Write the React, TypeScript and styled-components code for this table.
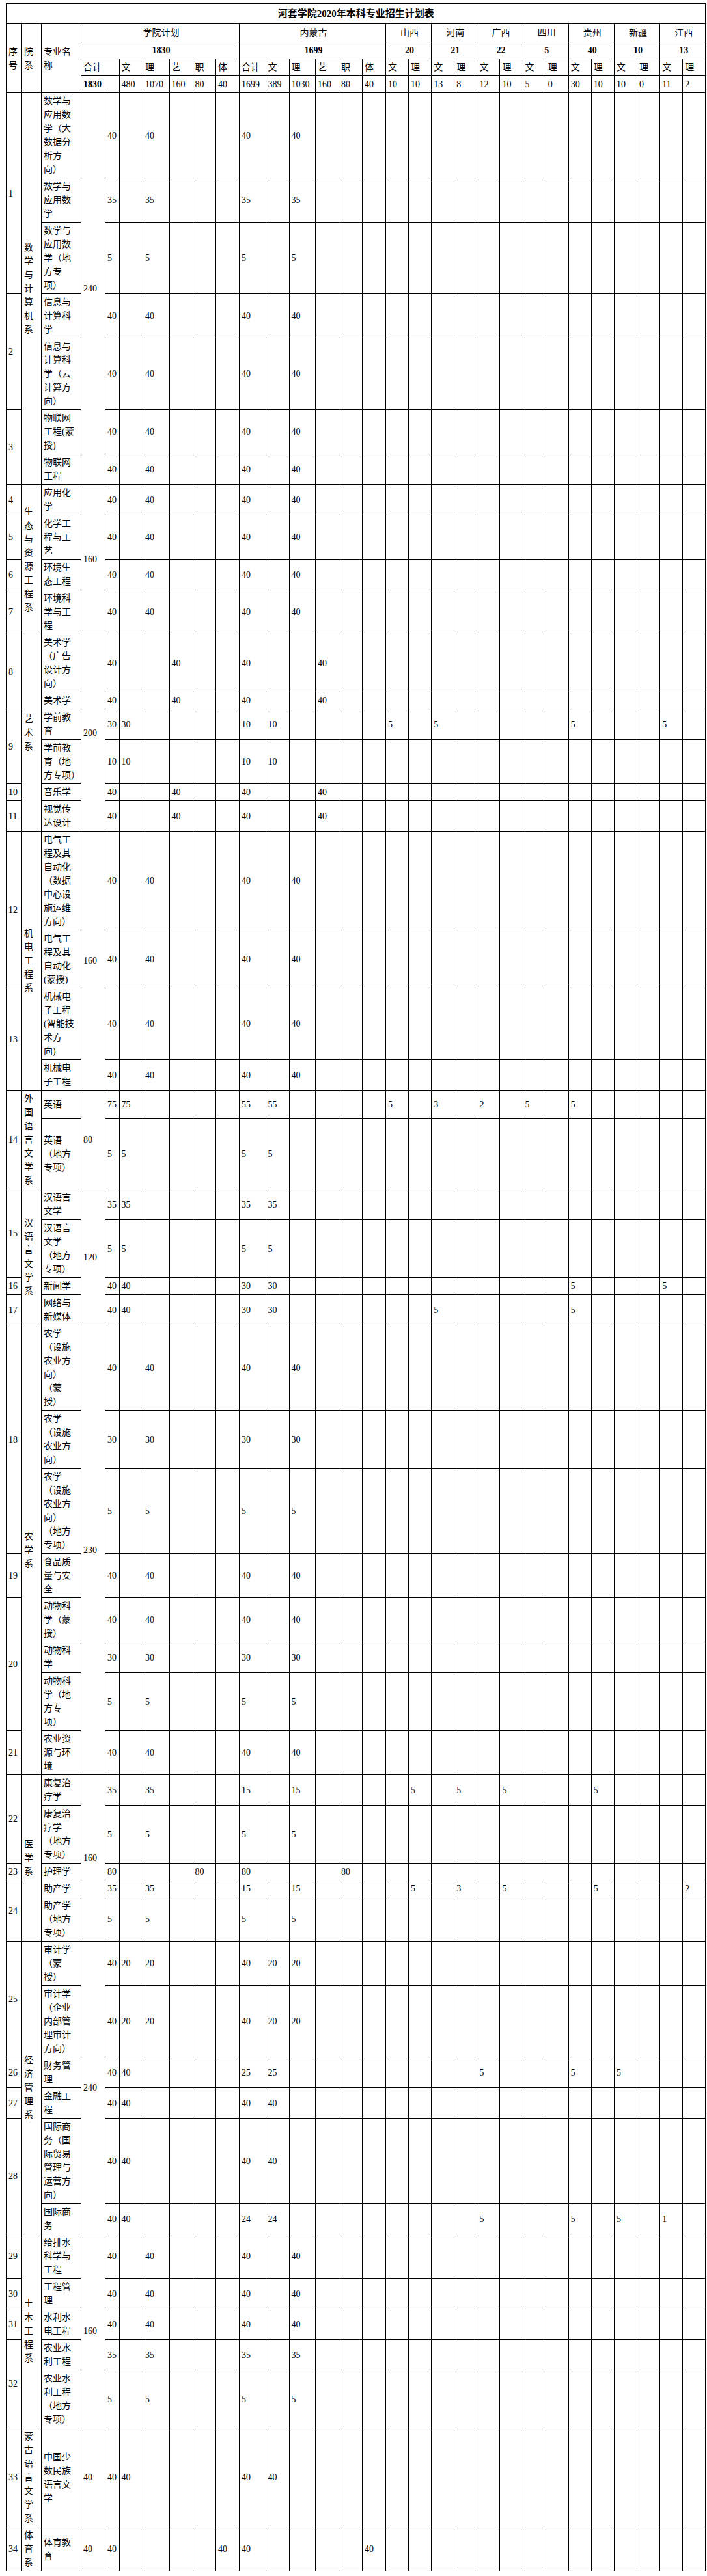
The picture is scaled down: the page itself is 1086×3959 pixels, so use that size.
import styled, { createGlobalStyle } from 'styled-components';

const GlobalStyle = createGlobalStyle`
  html, body {
    margin: 0;
    padding: 0;
    background: #fff;
  }
`;

type Cells = Record<number, string>;
type Sub = { name: string[]; h?: number; cells: Cells };
type Major = { no: number; subs: Sub[] };
type Dept = { name: string; total: string; majors: Major[] };

// common column patterns: 合计 + 文/理/艺 for 学院 and 内蒙古
const li = (v: string): Cells => ({ 4: v, 6: v, 10: v, 12: v });
const wen = (v: string): Cells => ({ 4: v, 5: v, 10: v, 11: v });
const yi = (v: string): Cells => ({ 4: v, 7: v, 10: v, 13: v });

const depts: Dept[] = [
  {
    name: '数学与计算机系',
    total: '240',
    majors: [
      {
        no: 1,
        subs: [
          { name: ['数学与', '应用数', '学（大', '数据分', '析方', '向）'], cells: li('40') },
          { name: ['数学与', '应用数', '学'], cells: li('35') },
          { name: ['数学与', '应用数', '学（地', '方专', '项）'], cells: li('5') },
        ],
      },
      {
        no: 2,
        subs: [
          { name: ['信息与', '计算科', '学'], cells: li('40') },
          { name: ['信息与', '计算科', '学（云', '计算方', '向）'], cells: li('40') },
        ],
      },
      {
        no: 3,
        subs: [
          { name: ['物联网', '工程(蒙', '授)'], cells: li('40') },
          { name: ['物联网', '工程'], cells: li('40') },
        ],
      },
    ],
  },
  {
    name: '生态与资源工程系',
    total: '160',
    majors: [
      { no: 4, subs: [{ name: ['应用化', '学'], cells: li('40') }] },
      { no: 5, subs: [{ name: ['化学工', '程与工', '艺'], cells: li('40') }] },
      { no: 6, subs: [{ name: ['环境生', '态工程'], cells: li('40') }] },
      { no: 7, subs: [{ name: ['环境科', '学与工', '程'], cells: li('40') }] },
    ],
  },
  {
    name: '艺术系',
    total: '200',
    majors: [
      {
        no: 8,
        subs: [
          { name: ['美术学', '（广告', '设计方', '向）'], cells: yi('40') },
          { name: ['美术学'], cells: yi('40') },
        ],
      },
      {
        no: 9,
        subs: [
          {
            name: ['学前教', '育'],
            cells: { 4: '30', 5: '30', 10: '10', 11: '10', 16: '5', 18: '5', 24: '5', 28: '5' },
          },
          { name: ['学前教', '育（地', '方专项）'], cells: wen('10') },
        ],
      },
      { no: 10, subs: [{ name: ['音乐学'], cells: yi('40') }] },
      { no: 11, subs: [{ name: ['视觉传', '达设计'], cells: yi('40') }] },
    ],
  },
  {
    name: '机电工程系',
    total: '160',
    majors: [
      {
        no: 12,
        subs: [
          {
            name: ['电气工', '程及其', '自动化', '（数据', '中心设', '施运维', '方向）'],
            cells: li('40'),
          },
          { name: ['电气工', '程及其', '自动化', '(蒙授)'], cells: li('40') },
        ],
      },
      {
        no: 13,
        subs: [
          { name: ['机械电', '子工程', '(智能技', '术方', '向)'], cells: li('40') },
          { name: ['机械电', '子工程'], cells: li('40') },
        ],
      },
    ],
  },
  {
    name: '外国语言文学系',
    total: '80',
    majors: [
      {
        no: 14,
        subs: [
          {
            name: ['英语'],
            h: 43,
            cells: { 4: '75', 5: '75', 10: '55', 11: '55', 16: '5', 18: '3', 20: '2', 22: '5', 24: '5' },
          },
          { name: ['英语', '（地方', '专项）'], h: 109, cells: wen('5') },
        ],
      },
    ],
  },
  {
    name: '汉语言文学系',
    total: '120',
    majors: [
      {
        no: 15,
        subs: [
          { name: ['汉语言', '文学'], cells: wen('35') },
          { name: ['汉语言', '文学', '（地方', '专项）'], cells: wen('5') },
        ],
      },
      {
        no: 16,
        subs: [{ name: ['新闻学'], cells: { 4: '40', 5: '40', 10: '30', 11: '30', 24: '5', 28: '5' } }],
      },
      {
        no: 17,
        subs: [
          { name: ['网络与', '新媒体'], cells: { 4: '40', 5: '40', 10: '30', 11: '30', 18: '5', 24: '5' } },
        ],
      },
    ],
  },
  {
    name: '农学系',
    total: '230',
    majors: [
      {
        no: 18,
        subs: [
          { name: ['农学', '（设施', '农业方', '向）', '（蒙', '授）'], cells: li('40') },
          { name: ['农学', '（设施', '农业方', '向）'], cells: li('30') },
          { name: ['农学', '（设施', '农业方', '向）', '（地方', '专项）'], cells: li('5') },
        ],
      },
      { no: 19, subs: [{ name: ['食品质', '量与安', '全'], cells: li('40') }] },
      {
        no: 20,
        subs: [
          { name: ['动物科', '学（蒙', '授）'], cells: li('40') },
          { name: ['动物科', '学'], cells: li('30') },
          { name: ['动物科', '学（地', '方专', '项）'], cells: li('5') },
        ],
      },
      { no: 21, subs: [{ name: ['农业资', '源与环', '境'], cells: li('40') }] },
    ],
  },
  {
    name: '医学系',
    total: '160',
    majors: [
      {
        no: 22,
        subs: [
          {
            name: ['康复治', '疗学'],
            cells: { 4: '35', 6: '35', 10: '15', 12: '15', 17: '5', 19: '5', 21: '5', 25: '5' },
          },
          { name: ['康复治', '疗学', '（地方', '专项）'], cells: li('5') },
        ],
      },
      { no: 23, subs: [{ name: ['护理学'], cells: { 4: '80', 8: '80', 10: '80', 14: '80' } }] },
      {
        no: 24,
        subs: [
          {
            name: ['助产学'],
            cells: { 4: '35', 6: '35', 10: '15', 12: '15', 17: '5', 19: '3', 21: '5', 25: '5', 29: '2' },
          },
          { name: ['助产学', '（地方', '专项）'], cells: li('5') },
        ],
      },
    ],
  },
  {
    name: '经济管理系',
    total: '240',
    majors: [
      {
        no: 25,
        subs: [
          { name: ['审计学', '（蒙', '授）'], cells: { 4: '40', 5: '20', 6: '20', 10: '40', 11: '20', 12: '20' } },
          {
            name: ['审计学', '（企业', '内部管', '理审计', '方向）'],
            cells: { 4: '40', 5: '20', 6: '20', 10: '40', 11: '20', 12: '20' },
          },
        ],
      },
      {
        no: 26,
        subs: [
          { name: ['财务管', '理'], cells: { 4: '40', 5: '40', 10: '25', 11: '25', 20: '5', 24: '5', 26: '5' } },
        ],
      },
      { no: 27, subs: [{ name: ['金融工', '程'], cells: wen('40') }] },
      {
        no: 28,
        subs: [
          { name: ['国际商', '务（国', '际贸易', '管理与', '运营方', '向）'], cells: wen('40') },
          {
            name: ['国际商', '务'],
            cells: { 4: '40', 5: '40', 10: '24', 11: '24', 20: '5', 24: '5', 26: '5', 28: '1' },
          },
        ],
      },
    ],
  },
  {
    name: '土木工程系',
    total: '160',
    majors: [
      { no: 29, subs: [{ name: ['给排水', '科学与', '工程'], cells: li('40') }] },
      { no: 30, subs: [{ name: ['工程管', '理'], cells: li('40') }] },
      { no: 31, subs: [{ name: ['水利水', '电工程'], cells: li('40') }] },
      {
        no: 32,
        subs: [
          { name: ['农业水', '利工程'], cells: li('35') },
          { name: ['农业水', '利工程', '（地方', '专项）'], cells: li('5') },
        ],
      },
    ],
  },
  {
    name: '蒙古语言文学系',
    total: '40',
    majors: [{ no: 33, subs: [{ name: ['中国少', '数民族', '语言文', '学'], h: 152, cells: wen('40') }] }],
  },
  {
    name: '体育系',
    total: '40',
    majors: [
      { no: 34, subs: [{ name: ['体育教', '育'], h: 68, cells: { 4: '40', 9: '40', 10: '40', 15: '40' } }] },
    ],
  },
];

const provinces = [
  { name: '山西', total: '20', wen: '10', li: '10' },
  { name: '河南', total: '21', wen: '13', li: '8' },
  { name: '广西', total: '22', wen: '12', li: '10' },
  { name: '四川', total: '5', wen: '5', li: '0' },
  { name: '贵州', total: '40', wen: '30', li: '10' },
  { name: '新疆', total: '10', wen: '10', li: '0' },
  { name: '江西', total: '13', wen: '11', li: '2' },
];

const colWidths = [
  24, 30, 61, 37, 21.5, 36.5, 40.5, 36, 35.5, 36, 40.5, 36, 40.5, 36, 36, 36,
  ...Array(14).fill(35.1),
];

const dataCols = Array.from({ length: 26 }, (_, i) => i + 4);
const planLabels = ['文', '理', '艺', '职', '体'];
const planValues = ['480', '1070', '160', '80', '40'];
const nmgValues = ['1699', '389', '1030', '160', '80', '40'];

const rowHeight = (s: Sub) => s.h ?? 5 + 21 * s.name.length;

const App = () => {
  return (
    <>
      <GlobalStyle />
      <Page>
        <Table>
          <colgroup>
            {colWidths.map((w, i) => (
              <Col key={i} $w={w} />
            ))}
          </colgroup>
          <tbody>
            <Row $h={31}>
              <TitleCell colSpan={30}>河套学院2020年本科专业招生计划表</TitleCell>
            </Row>
            <Row $h={28}>
              <Cell rowSpan={4}>
                <Stack>序号</Stack>
              </Cell>
              <Cell rowSpan={4}>
                <Stack>院系</Stack>
              </Cell>
              <Cell rowSpan={4}>
                <Line>专业名</Line>
                <Line>称</Line>
              </Cell>
              <Cell colSpan={7} $align="center">
                学院计划
              </Cell>
              <Cell colSpan={6} $align="center">
                内蒙古
              </Cell>
              {provinces.map((p) => (
                <Cell key={p.name} colSpan={2} $align="center">
                  {p.name}
                </Cell>
              ))}
            </Row>
            <Row $h={26}>
              <Cell colSpan={7} $align="center" $bold>
                1830
              </Cell>
              <Cell colSpan={6} $align="center" $bold>
                1699
              </Cell>
              {provinces.map((p) => (
                <Cell key={p.name} colSpan={2} $align="center" $bold>
                  {p.total}
                </Cell>
              ))}
            </Row>
            <Row $h={26}>
              <Cell colSpan={2}>合计</Cell>
              {planLabels.map((l) => (
                <Cell key={'a' + l}>{l}</Cell>
              ))}
              <Cell>合计</Cell>
              {planLabels.map((l) => (
                <Cell key={'b' + l}>{l}</Cell>
              ))}
              {provinces.map((p) => [
                <Cell key={p.name + 'w'}>文</Cell>,
                <Cell key={p.name + 'l'}>理</Cell>,
              ])}
            </Row>
            <Row $h={26}>
              <Cell colSpan={2} $bold>
                1830
              </Cell>
              {planValues.map((v, i) => (
                <Cell key={'pv' + i}>{v}</Cell>
              ))}
              {nmgValues.map((v, i) => (
                <Cell key={'nv' + i}>{v}</Cell>
              ))}
              {provinces.map((p) => [
                <Cell key={p.name + 'w'}>{p.wen}</Cell>,
                <Cell key={p.name + 'l'}>{p.li}</Cell>,
              ])}
            </Row>
            {depts.flatMap((d) => {
              const span = d.majors.reduce((n, m) => n + m.subs.length, 0);
              return d.majors.flatMap((m, mi) =>
                m.subs.map((s, si) => {
                  const deptStart = mi === 0 && si === 0;
                  return (
                    <Row key={`${m.no}-${si}`} $h={rowHeight(s)}>
                      {si === 0 && <Cell rowSpan={m.subs.length}>{m.no}</Cell>}
                      {deptStart && (
                        <Cell rowSpan={span}>
                          <Stack>{d.name}</Stack>
                        </Cell>
                      )}
                      <Cell>
                        {s.name.map((l, li2) => (
                          <Line key={li2}>{l}</Line>
                        ))}
                      </Cell>
                      {deptStart && <Cell rowSpan={span}>{d.total}</Cell>}
                      {dataCols.map((c) => (
                        <Cell key={c}>{s.cells[c] ?? ''}</Cell>
                      ))}
                    </Row>
                  );
                }),
              );
            })}
          </tbody>
        </Table>
      </Page>
    </>
  );
};

export default App;

const Page = styled.div`
  padding: 5px 0 8px 9px;
  background: #fff;
`;

const Table = styled.table`
  border-collapse: collapse;
  table-layout: fixed;
  width: 1075px;
  font-family: 'Liberation Serif', 'Noto Sans CJK SC', serif;
  font-size: 14px;
  line-height: 21px;
  color: #000;
`;

const Col = styled.col<{ $w: number }>`
  width: ${(p) => p.$w}px;
`;

const Row = styled.tr<{ $h: number }>`
  height: ${(p) => p.$h}px;
`;

const Cell = styled.td<{ $align?: 'left' | 'center'; $bold?: boolean }>`
  border: 1px solid #000;
  padding: 0 0 0 3px;
  vertical-align: middle;
  text-align: ${(p) => p.$align ?? 'left'};
  font-weight: ${(p) => (p.$bold ? 700 : 400)};
  white-space: nowrap;
  overflow: visible;
`;

const TitleCell = styled.td`
  border: 1px solid #000;
  padding: 0;
  text-align: center;
  vertical-align: middle;
  font-size: 15px;
  font-weight: 700;
`;

const Stack = styled.div`
  width: 1em;
  white-space: normal;
  word-break: break-all;
  line-height: 21px;
`;

const Line = styled.div`
  white-space: nowrap;
`;
